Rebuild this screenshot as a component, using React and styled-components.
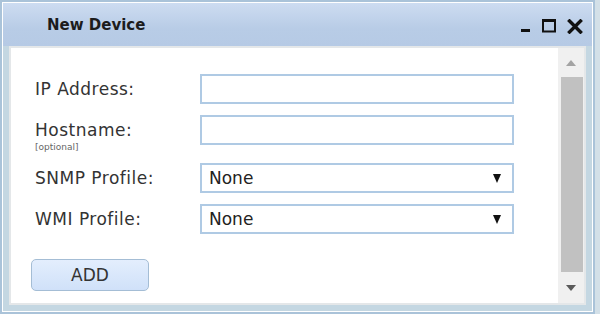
import styled, { createGlobalStyle } from 'styled-components'

const GlobalStyle = createGlobalStyle`
  html, body {
    margin: 0;
    padding: 0;
  }
  body {
    width: 600px;
    height: 314px;
    overflow: hidden;
    background: #d3e0e8;
    font-family: "DejaVu Sans", Verdana, sans-serif;
  }
`

const Window = styled.div`
  box-sizing: border-box;
  width: 595px;
  height: 314px;
  border: 2px solid #aac3d9;
  box-shadow: inset 0 0 0 1px #ffffff;
  background: #c4d7e2;
  padding: 1px;
  display: flex;
  flex-direction: column;
`

const TitleBar = styled.div`
  height: 43px;
  flex-shrink: 0;
  display: flex;
  align-items: center;
  justify-content: space-between;
  padding: 0 9px 0 44px;
  background: linear-gradient(#cddcf1, #b8cce6 60%, #b6cae5);
`

const Title = styled.span`
  font-size: 15px;
  font-weight: bold;
  color: #1c1c1c;
  margin-top: 1px;
`

const Controls = styled.div`
  display: flex;
  align-items: center;
  gap: 11px;
  margin-top: 3px;
`

const Body = styled.div`
  flex: 1;
  display: flex;
  padding: 0 6px 6px 6px;
`

const Panel = styled.div`
  flex: 1;
  display: flex;
  border: 2px solid #e4e7e9;
  background: #ffffff;
`

const FormArea = styled.div`
  flex: 1;
  padding: 26px 0 0 24px;
  display: flex;
  flex-direction: column;
`

const Form = styled.div`
  display: flex;
  flex-direction: column;
  gap: 11px;
`

const Row = styled.div`
  display: grid;
  grid-template-columns: 165px 314px;
  align-items: ${(p) => (p.$top ? 'start' : 'center')};
`

const LabelBlock = styled.div`
  display: flex;
  flex-direction: column;
  padding-top: ${(p) => (p.$top ? '5px' : '0')};
`

const Label = styled.label`
  font-size: 17px;
  line-height: 20px;
  color: #333333;
  letter-spacing: 0.5px;
`

const Hint = styled.span`
  font-size: 9px;
  line-height: 10px;
  margin-top: 2px;
  color: #666666;
`

const TextInput = styled.input`
  box-sizing: border-box;
  width: 314px;
  height: 30px;
  border: 2px solid #afcae4;
  background: #ffffff;
  outline: none;
  padding: 0 7px;
  font-family: inherit;
  font-size: 17px;
`

const SelectWrap = styled.div`
  position: relative;
  width: 314px;
  height: 30px;
`

const Select = styled.select`
  box-sizing: border-box;
  appearance: none;
  width: 100%;
  height: 100%;
  border: 2px solid #afcae4;
  border-radius: 0;
  background: #ffffff;
  outline: none;
  padding: 0 0 0 7px;
  font-family: inherit;
  font-size: 17px;
  color: #222222;
`

const Arrow = styled.svg`
  position: absolute;
  right: 13px;
  top: 11px;
  pointer-events: none;
`

const AddButton = styled.button`
  box-sizing: border-box;
  margin: 25px 0 0 -4px;
  width: 118px;
  height: 32px;
  border: 1px solid #a4bdd5;
  border-radius: 5px;
  background: linear-gradient(#e3eefd, #d0e1f9);
  font-family: inherit;
  font-size: 17px;
  color: #333333;
  padding: 0;
`

const Scrollbar = styled.div`
  width: 26px;
  background: #f0f0f0;
  display: flex;
  flex-direction: column;
`

const ScrollArrow = styled.div`
  height: ${(p) => p.$h}px;
  display: flex;
  align-items: center;
  justify-content: center;
`

const Thumb = styled.div`
  flex: 1;
  margin: 0 1px 0 3px;
  background: #c1c1c1;
`

const Minimize = () => (
  <svg width="10" height="14" viewBox="0 0 10 14">
    <rect x="0" y="10" width="9" height="3" fill="#111" />
  </svg>
)

const Maximize = () => (
  <svg width="14" height="14" viewBox="0 0 14 14">
    <rect x="1" y="1.5" width="12" height="11" fill="none" stroke="#111" strokeWidth="2" />
    <rect x="0" y="0" width="14" height="3" fill="#111" />
  </svg>
)

const Close = () => (
  <svg width="16" height="15" viewBox="0 0 16 15">
    <path d="M2.5 2 L13.5 13 M13.5 2 L2.5 13" stroke="#111" strokeWidth="3.4" strokeLinecap="square" />
  </svg>
)

const DropArrow = () => (
  <Arrow width="8" height="9" viewBox="0 0 8 9">
    <polygon points="0,0 8,0 4,9" fill="#111" />
  </Arrow>
)

const App = () => {
  return (
    <>
      <GlobalStyle />
      <Window>
        <TitleBar>
          <Title>New Device</Title>
          <Controls>
            <Minimize />
            <Maximize />
            <Close />
          </Controls>
        </TitleBar>
        <Body>
          <Panel>
            <FormArea>
              <Form>
                <Row>
                  <Label>IP Address:</Label>
                  <TextInput type="text" />
                </Row>
                <Row $top>
                  <LabelBlock $top>
                    <Label>Hostname:</Label>
                    <Hint>[optional]</Hint>
                  </LabelBlock>
                  <TextInput type="text" />
                </Row>
                <Row>
                  <Label>SNMP Profile:</Label>
                  <SelectWrap>
                    <Select defaultValue="none">
                      <option value="none">None</option>
                    </Select>
                    <DropArrow />
                  </SelectWrap>
                </Row>
                <Row>
                  <Label>WMI Profile:</Label>
                  <SelectWrap>
                    <Select defaultValue="none">
                      <option value="none">None</option>
                    </Select>
                    <DropArrow />
                  </SelectWrap>
                </Row>
              </Form>
              <div>
                <AddButton>ADD</AddButton>
              </div>
            </FormArea>
            <Scrollbar>
              <ScrollArrow $h={29}>
                <svg width="10" height="6" viewBox="0 0 10 6">
                  <polygon points="0,6 10,6 5,0" fill="#a3a3a3" />
                </svg>
              </ScrollArrow>
              <Thumb />
              <ScrollArrow $h={31}>
                <svg width="10" height="6" viewBox="0 0 10 6">
                  <polygon points="0,0 10,0 5,6" fill="#5a5a5a" />
                </svg>
              </ScrollArrow>
            </Scrollbar>
          </Panel>
        </Body>
      </Window>
    </>
  )
}

export default App
